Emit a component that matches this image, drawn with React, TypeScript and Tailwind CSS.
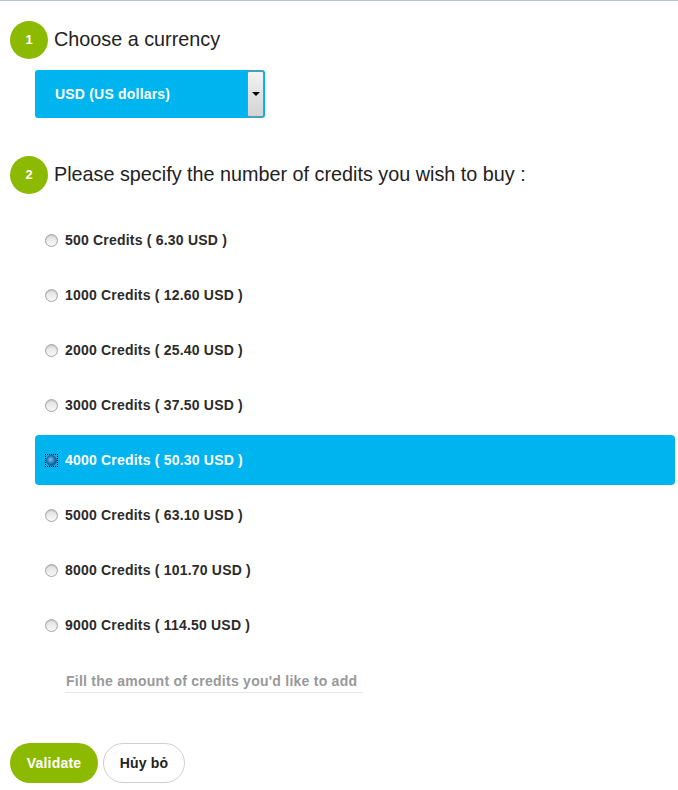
import { useState } from "react";

const packs = [
  { credits: 500, price: "6.30" },
  { credits: 1000, price: "12.60" },
  { credits: 2000, price: "25.40" },
  { credits: 3000, price: "37.50" },
  { credits: 4000, price: "50.30" },
  { credits: 5000, price: "63.10" },
  { credits: 8000, price: "101.70" },
  { credits: 9000, price: "114.50" },
];

function Step({ n, label }: { n: number; label: string }) {
  return (
    <div className="flex items-center gap-[6px] ml-[10px]">
      <div className="w-[38px] h-[38px] rounded-full bg-[#8cba00] text-white text-[13px] font-bold flex items-center justify-center">
        {n}
      </div>
      <span className="text-[19.8px] text-[#222] leading-none">{label}</span>
    </div>
  );
}

function Radio({ checked }: { checked: boolean }) {
  if (checked) {
    return (
      <span className="w-[13px] h-[13px] border border-dotted border-black flex items-center justify-center">
        <span className="w-[11px] h-[11px] rounded-full border border-[#2a5d80] bg-[radial-gradient(circle_at_40%_40%,#6fc3f5,#1a6aa8_60%,#0d3d66)]" />
      </span>
    );
  }
  return (
    <span className="w-[13px] h-[13px] rounded-full border border-[#a5a5a5] bg-[linear-gradient(#e0e0e0,#f8f8f8)] shadow-[inset_0_1px_1px_rgba(0,0,0,0.15)]" />
  );
}

export default function App() {
  const [selected, setSelected] = useState(4000);

  return (
    <div className="w-[678px] h-[790px] bg-white border-t border-[#b3c5d6] font-['Liberation_Sans',Arial,sans-serif]">
      <div className="pt-[20px]">
        <Step n={1} label="Choose a currency" />
      </div>

      <div className="ml-[35px] mt-[11px] w-[230px] h-[48px] rounded-[3px] bg-[#00b4f0] flex items-center justify-between overflow-hidden">
        <span className="ml-[20px] text-white text-[14px] tracking-[0.2px] font-bold">USD (US dollars)</span>
        <div className="w-[17px] h-[46px] mr-[1px] border border-[#8a8a8a] rounded-[2px] bg-[linear-gradient(#f4f4f4,#e2e2e2_50%,#d4d4d4)] flex items-center justify-center">
          <span className="w-0 h-0 border-l-[4px] border-r-[4px] border-t-[4px] border-l-transparent border-r-transparent border-t-black" />
        </div>
      </div>

      <div className="mt-[38px]">
        <Step n={2} label="Please specify the number of credits you wish to buy :" />
      </div>

      <div className="mt-[21px] ml-[35px] w-[640px] flex flex-col gap-[5px]">
        {packs.map((p) => {
          const on = p.credits === selected;
          return (
            <div
              key={p.credits}
              onClick={() => setSelected(p.credits)}
              className={`h-[50px] flex items-center gap-[7px] pl-[10px] rounded-[4px] cursor-pointer ${on ? "bg-[#00b4f0] text-white" : "text-[#2b2b2b]"}`}
            >
              <Radio checked={on} />
              <span className="text-[14px] tracking-[0.2px] font-bold">
                {p.credits} Credits ( {p.price} USD )
              </span>
            </div>
          );
        })}
      </div>

      <div className="mt-[10px] ml-[65px] w-[298px] h-[33px] border-b border-[#e6e6e6] flex items-end">
        <input
          className="w-full pb-0 pl-[1px] text-[14px] tracking-[0.25px] font-bold text-[#333] placeholder:text-[#999] outline-none bg-transparent"
          placeholder="Fill the amount of credits you'd like to add"
        />
      </div>

      <div className="mt-[50px] ml-[10px] flex gap-[5px]">
        <button className="h-[40px] w-[88px] rounded-full bg-[#8cba00] text-white text-[14px] tracking-[0.2px] font-bold">
          Validate
        </button>
        <button className="h-[40px] w-[82px] rounded-full bg-white border border-[#cfcfcf] text-[#222] text-[14px] tracking-[0.2px] font-bold">
          Hủy bỏ
        </button>
      </div>
    </div>
  );
}
